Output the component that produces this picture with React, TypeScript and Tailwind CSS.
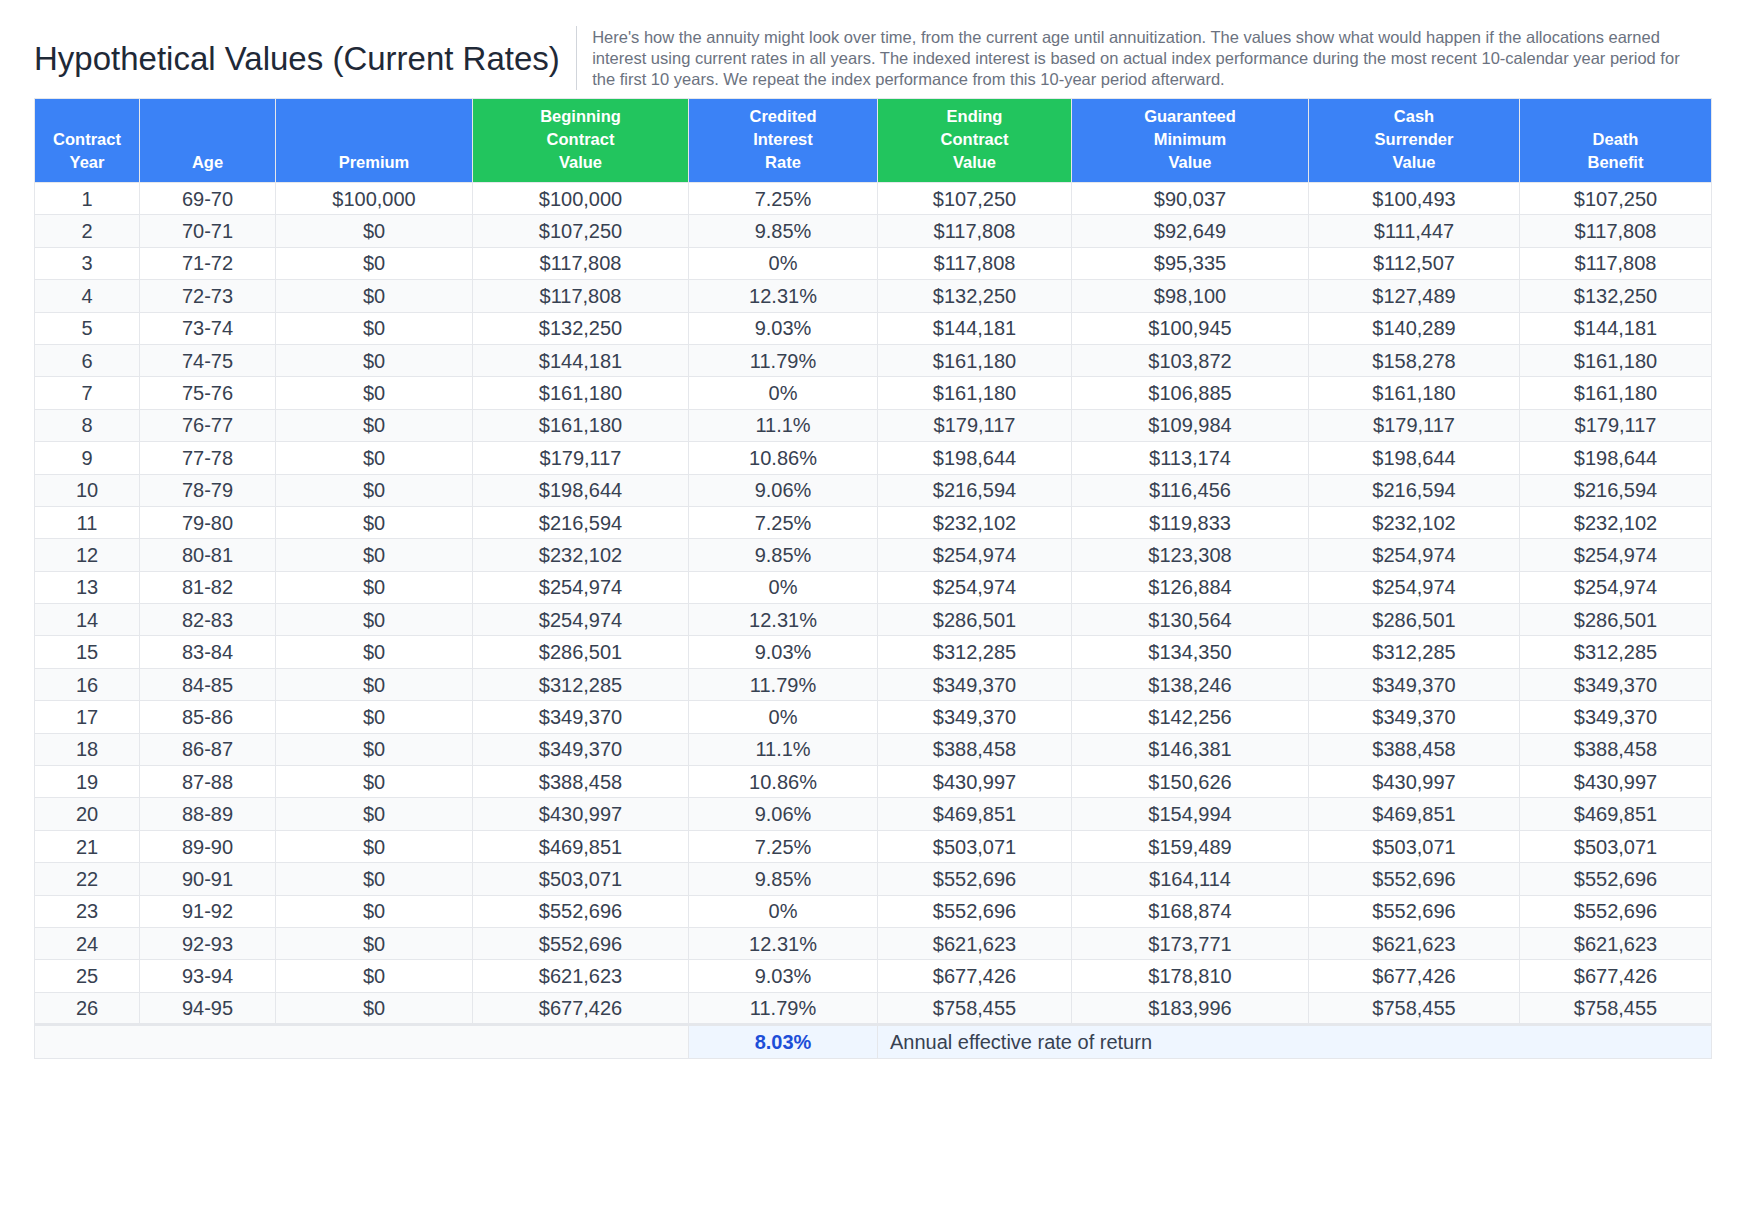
const rows: string[][] = [
["1","69-70","$100,000","$100,000","7.25%","$107,250","$90,037","$100,493","$107,250"],
["2","70-71","$0","$107,250","9.85%","$117,808","$92,649","$111,447","$117,808"],
["3","71-72","$0","$117,808","0%","$117,808","$95,335","$112,507","$117,808"],
["4","72-73","$0","$117,808","12.31%","$132,250","$98,100","$127,489","$132,250"],
["5","73-74","$0","$132,250","9.03%","$144,181","$100,945","$140,289","$144,181"],
["6","74-75","$0","$144,181","11.79%","$161,180","$103,872","$158,278","$161,180"],
["7","75-76","$0","$161,180","0%","$161,180","$106,885","$161,180","$161,180"],
["8","76-77","$0","$161,180","11.1%","$179,117","$109,984","$179,117","$179,117"],
["9","77-78","$0","$179,117","10.86%","$198,644","$113,174","$198,644","$198,644"],
["10","78-79","$0","$198,644","9.06%","$216,594","$116,456","$216,594","$216,594"],
["11","79-80","$0","$216,594","7.25%","$232,102","$119,833","$232,102","$232,102"],
["12","80-81","$0","$232,102","9.85%","$254,974","$123,308","$254,974","$254,974"],
["13","81-82","$0","$254,974","0%","$254,974","$126,884","$254,974","$254,974"],
["14","82-83","$0","$254,974","12.31%","$286,501","$130,564","$286,501","$286,501"],
["15","83-84","$0","$286,501","9.03%","$312,285","$134,350","$312,285","$312,285"],
["16","84-85","$0","$312,285","11.79%","$349,370","$138,246","$349,370","$349,370"],
["17","85-86","$0","$349,370","0%","$349,370","$142,256","$349,370","$349,370"],
["18","86-87","$0","$349,370","11.1%","$388,458","$146,381","$388,458","$388,458"],
["19","87-88","$0","$388,458","10.86%","$430,997","$150,626","$430,997","$430,997"],
["20","88-89","$0","$430,997","9.06%","$469,851","$154,994","$469,851","$469,851"],
["21","89-90","$0","$469,851","7.25%","$503,071","$159,489","$503,071","$503,071"],
["22","90-91","$0","$503,071","9.85%","$552,696","$164,114","$552,696","$552,696"],
["23","91-92","$0","$552,696","0%","$552,696","$168,874","$552,696","$552,696"],
["24","92-93","$0","$552,696","12.31%","$621,623","$173,771","$621,623","$621,623"],
["25","93-94","$0","$621,623","9.03%","$677,426","$178,810","$677,426","$677,426"],
["26","94-95","$0","$677,426","11.79%","$758,455","$183,996","$758,455","$758,455"],
];

const headers: [string[], boolean][] = [
  [["Contract","Year"], false],
  [["Age"], false],
  [["Premium"], false],
  [["Beginning","Contract","Value"], true],
  [["Credited","Interest","Rate"], false],
  [["Ending","Contract","Value"], true],
  [["Guaranteed","Minimum","Value"], false],
  [["Cash","Surrender","Value"], false],
  [["Death","Benefit"], false],
];
const widths = [105,136,197,216,189,194,237,211,192];

export default function App() {
  return (
    <div className="w-[1742px] h-[1218px] bg-white" style={{ fontFamily: '"Liberation Sans", Arial, sans-serif' }}>
      <div className="px-[34px] pt-[26px]">
        <div className="flex items-center h-[64px] mb-[8px]">
          <h1 className="text-[33px] text-[#1f2937] whitespace-nowrap pr-[16px] leading-none">Hypothetical Values (Current Rates)</h1>
          <div className="self-stretch w-px bg-[#d1d5db] mr-[16px]"></div>
          <p className="text-[16.5px] leading-[21px] text-[#6b7280] pr-[6px]">
            Here's how the annuity might look over time, from the current age until annuitization. The values show what would happen if the allocations earned interest using current rates in all years. The indexed interest is based on actual index performance during the most recent 10-calendar year period for the first 10 years. We repeat the index performance from this 10-year period afterward.
          </p>
        </div>
        <table className="border-collapse table-fixed w-[1677px] border border-[#e5e7eb]">
          <colgroup>
            {widths.map((w, i) => <col key={i} style={{ width: w }} />)}
          </colgroup>
          <thead>
            <tr className="h-[84px]">
              {headers.map(([lines, green], i) => (
                <th key={i} className={`${green ? "bg-[#22c55e]" : "bg-[#3b82f6]"} text-white font-bold text-[16.5px] leading-[23px] align-bottom pb-[8px] border border-[#e5e7eb]`}>
                  {lines.map((l, j) => <div key={j}>{l}</div>)}
                </th>
              ))}
            </tr>
          </thead>
          <tbody>
            {rows.map((r, i) => (
              <tr key={i} className={`h-[32.4px] ${i % 2 ? "bg-[#f9fafb]" : "bg-white"}`}>
                {r.map((c, j) => (
                  <td key={j} className="text-center text-[20px] text-[#374151] border border-[#e5e7eb] p-0 leading-none">{c}</td>
                ))}
              </tr>
            ))}
            <tr className="h-[34px] border-t-[3px] border-[#e5e7eb]">
              <td colSpan={4} className="bg-[#f9fafb] border border-[#e5e7eb]"></td>
              <td className="bg-[#eff6ff] text-center text-[20px] font-bold text-[#1d4ed8] border border-[#e5e7eb]">8.03%</td>
              <td colSpan={4} className="bg-[#eff6ff] text-left pl-[12px] text-[20px] text-[#374151] border border-[#e5e7eb]">Annual effective rate of return</td>
            </tr>
          </tbody>
        </table>
      </div>
    </div>
  );
}
